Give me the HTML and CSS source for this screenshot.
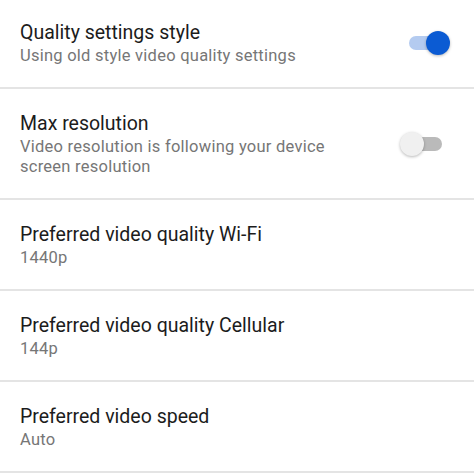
FILE: index.html
```html
<!DOCTYPE html>
<html lang="en">
<head>
    <meta charset="UTF-8">
    <meta name="viewport" content="width=device-width, initial-scale=1.0">
    <title>Video settings</title>
    <link rel="stylesheet" href="styles.css">
</head>
<body>
    <div class="list">
        <div class="item">
            <div class="text">
                <div class="title">Quality settings style</div>
                <div class="summary">Using old style video quality settings</div>
            </div>
            <div class="switch on"><span class="track"></span><span class="thumb"></span></div>
        </div>
        <div class="item">
            <div class="text">
                <div class="title">Max resolution</div>
                <div class="summary">Video resolution is following your device screen resolution</div>
            </div>
            <div class="switch"><span class="track"></span><span class="thumb"></span></div>
        </div>
        <div class="item">
            <div class="text">
                <div class="title">Preferred video quality Wi-Fi</div>
                <div class="summary">1440p</div>
            </div>
        </div>
        <div class="item">
            <div class="text">
                <div class="title">Preferred video quality Cellular</div>
                <div class="summary">144p</div>
            </div>
        </div>
        <div class="item">
            <div class="text">
                <div class="title">Preferred video speed</div>
                <div class="summary">Auto</div>
            </div>
        </div>
    </div>
</body>
</html>
```

FILE: styles.css
```css
body {
    margin: 0;
    background-color: #fff;
    font-family: Roboto, "Noto Sans", sans-serif;
    overflow: hidden;
}
.list {
    margin-top: -2px;
}
.item {
    display: flex;
    align-items: center;
    padding: 21px 24px 21px 20px;
    border-bottom: 2px solid #e4e4e4;
}
.text {
    flex: 1;
    padding-right: 40px;
}
.title {
    font-size: 19.5px;
    line-height: 27px;
    color: #1c1c1c;
}
.summary {
    font-size: 16.5px;
    line-height: 20px;
    letter-spacing: 0.25px;
    color: #767676;
}
.switch {
    position: relative;
    width: 50px;
    height: 26px;
    flex-shrink: 0;
}
.track {
    position: absolute;
    left: 9px;
    right: 8px;
    top: 6px;
    height: 14px;
    border-radius: 7px;
    background-color: #bababa;
}
.thumb {
    position: absolute;
    left: 0;
    top: 1px;
    width: 24px;
    height: 24px;
    border-radius: 50%;
    background-color: #f0f0f0;
    box-shadow: 0 1px 3px rgba(0, 0, 0, 0.28);
}
.switch.on .track {
    background-color: #b4cbf0;
}
.switch.on .thumb {
    left: 26px;
    background-color: #0b5bd3;
}
```
